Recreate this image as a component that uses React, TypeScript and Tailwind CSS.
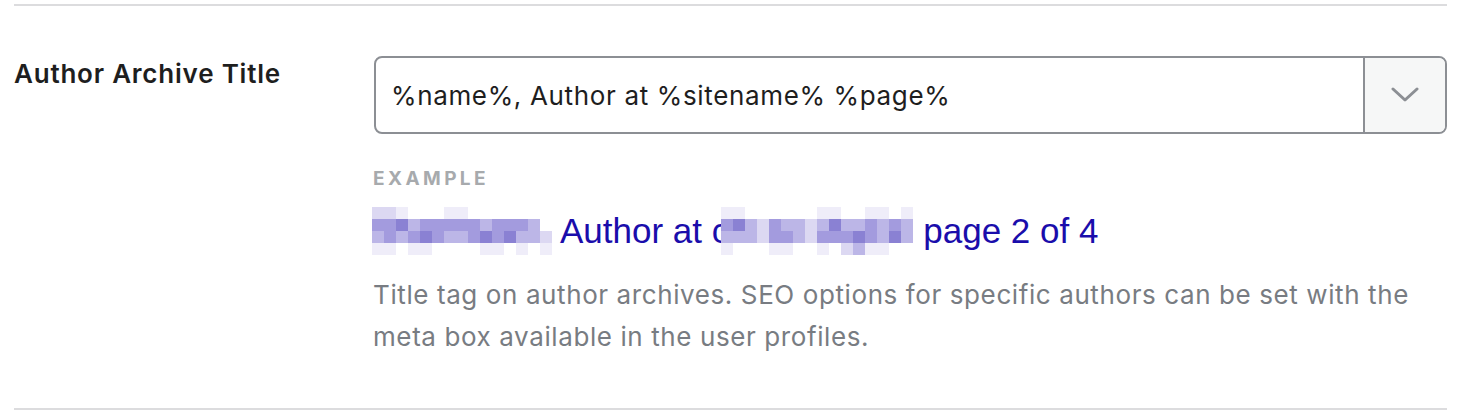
const shades = [
  'bg-transparent',
  'bg-[#efedf9]',
  'bg-[#dcd8f2]',
  'bg-[#bcb6e7]',
  'bg-[#a39bde]',
  'bg-[#8a81d3]',
];

// pixelated placeholders that hide the name and site in the example
const nameBlur = [
  [2, 2, 1, 0, 0, 0, 1, 1, 0, 0, 0, 0, 0, 0, 0],
  [4, 4, 5, 3, 4, 4, 4, 4, 4, 3, 4, 4, 4, 3, 0],
  [3, 4, 3, 4, 5, 4, 3, 3, 4, 5, 4, 5, 3, 3, 2],
  [1, 1, 0, 1, 1, 0, 0, 0, 0, 1, 1, 0, 1, 0, 1],
];

const siteBlur = [
  [1, 1, 0, 0, 0, 0, 0, 0, 1, 1, 0, 0, 1, 1, 0, 1],
  [4, 5, 3, 2, 4, 3, 3, 2, 3, 5, 3, 3, 4, 3, 4, 3],
  [3, 3, 3, 2, 4, 4, 3, 2, 4, 4, 4, 5, 4, 3, 5, 3],
  [1, 0, 0, 0, 1, 1, 0, 0, 1, 0, 2, 3, 1, 1, 0, 0],
];

const Mosaic = ({ rows, className = '' }: { rows: number[][]; className?: string }) => (
  <div className={`flex flex-col shrink-0 ${className}`}>
    {rows.map((row, i) => (
      <div key={i} className="flex">
        {row.map((v, j) => (
          <div key={j} className={`w-[12px] h-[12px] ${shades[v]}`} />
        ))}
      </div>
    ))}
  </div>
);

const App = () => {
  return (
    <div className="w-[1476px] h-[414px] bg-white pt-[4px] pl-[14px] font-['Inter',sans-serif]">
      <div className="w-[1433px] h-[406px] border-y-2 border-[#dcdcde] flex pt-[50px]">
        {/* Label */}
        <div className="w-[360px] shrink-0">
          <label className="block text-[26px] leading-[36px] font-semibold tracking-[0.03em] text-[#1e1e1e]">
            Author Archive Title
          </label>
        </div>

        {/* Field */}
        <div className="flex-1 flex flex-col">
          <div className="h-[78px] flex border-2 border-[#8c8f94] rounded-[8px] overflow-hidden">
            <div className="flex-1 flex items-center pl-[15px] text-[26px] tracking-[0.025em] text-[#1e1e1e]">
              %name%, Author at %sitename% %page%
            </div>
            <button className="w-[82px] border-l-2 border-[#8c8f94] bg-[#f6f7f7] flex items-center justify-center">
              <svg width="28" height="16" viewBox="0 0 28 16" fill="none">
                <polyline
                  points="2,2 14,13 26,2"
                  stroke="#8c8f94"
                  strokeWidth="3"
                  strokeLinecap="round"
                  strokeLinejoin="round"
                />
              </svg>
            </button>
          </div>

          <p className="mt-[33px] -ml-[1px] text-[19px] leading-[24px] font-bold tracking-[0.18em] text-[#a7aaad] uppercase">
            Example
          </p>

          <div className="mt-[16px] flex items-center font-['Liberation_Sans',Arial,sans-serif] text-[35px] leading-[40px] text-[#1a0dab]">
            <Mosaic rows={nameBlur} className="-ml-[2px]" />
            <span className="ml-[8px]">Author at c</span>
            <Mosaic rows={siteBlur} className="-ml-[8px] relative" />
            <span className="ml-[10px]">page 2 of 4</span>
          </div>

          <p className="mt-[19px] -ml-[1px] text-[26px] leading-[42px] tracking-[0.023em] text-[#787c82]">
            Title tag on author archives. SEO options for specific authors can be set with the meta box available in the user profiles.
          </p>
        </div>
      </div>
    </div>
  );
};

export default App;
